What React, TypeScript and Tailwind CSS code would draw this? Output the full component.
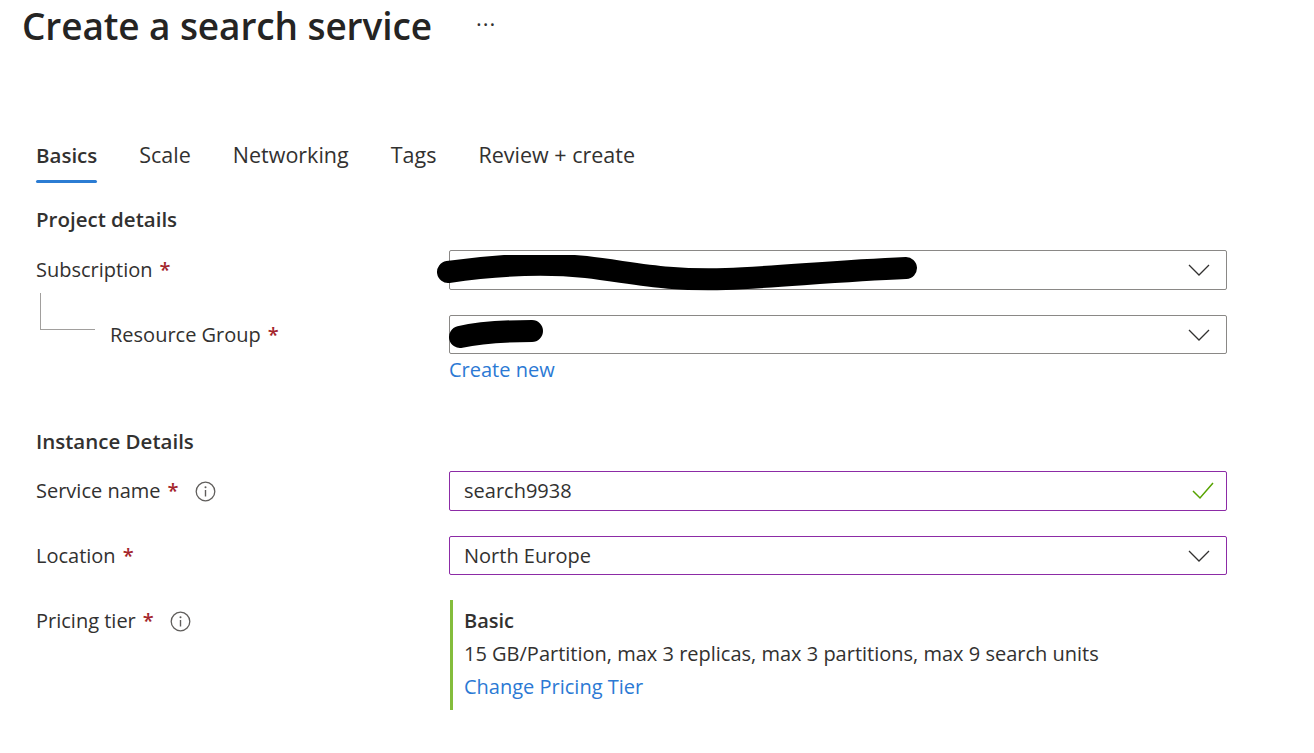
import React from "react"

const font = { fontFamily: '"Open Sans", "Noto Sans", sans-serif' }

function Chevron() {
  return (
    <svg width="22" height="12" viewBox="0 0 22 12" className="shrink-0">
      <path d="M1 1 L11 11 L21 1" fill="none" stroke="#323130" strokeWidth="1.3" />
    </svg>
  )
}

function Check() {
  return (
    <svg width="22" height="18" viewBox="0 0 22 18" className="shrink-0">
      <path d="M1 9 L8 16 L21 1" fill="none" stroke="#57a300" strokeWidth="1.5" />
    </svg>
  )
}

function Info() {
  return (
    <svg width="21" height="21" viewBox="0 0 21 21" className="shrink-0">
      <circle cx="10.5" cy="10.5" r="9.3" fill="none" stroke="#605e5c" strokeWidth="1.3" />
      <circle cx="10.5" cy="6.3" r="1" fill="#605e5c" />
      <path d="M10.5 9 V15.5" stroke="#605e5c" strokeWidth="1.4" />
    </svg>
  )
}

function Req() {
  return <span className="text-[#a4262c] font-semibold ml-[7px]">*</span>
}

function Label({ children, info }: { children: React.ReactNode; info?: boolean }) {
  return (
    <div className="flex items-center text-[20px] text-[#323130]">
      {children}
      <Req />
      {info && <span className="ml-[16px] flex"><Info /></span>}
    </div>
  )
}

export default function App() {
  const tabs = ["Basics", "Scale", "Networking", "Tags", "Review + create"]
  return (
    <div className="w-[1314px] h-[753px] bg-white text-[#323130] overflow-hidden" style={font}>
      <div className="flex items-center pl-[22px] pt-[4px] h-[48px]">
        <h1 className="text-[37px] leading-[40px] font-semibold tracking-[-0.1px] text-[#252423]">Create a search service</h1>
        <span className="ml-[44px] text-[22px] leading-[30px] tracking-[1px] text-[#323130] -mt-[6px]">···</span>
      </div>

      <div className="pl-[36px] pr-[87px]">
        <div className="flex gap-[42px] mt-[92px]">
          {tabs.map((t, i) => (
            <div key={t} className="flex flex-col">
              <span className={`leading-[30px] ${i === 0 ? "font-semibold text-[20.5px]" : "text-[21.5px]"}`}>{t}</span>
              <span className={`mt-[10px] h-[3px] rounded-sm ${i === 0 ? "bg-[#2b7cd3]" : "bg-transparent"}`} />
            </div>
          ))}
        </div>

        <h2 className="mt-[21px] text-[20.5px] font-semibold leading-[30px]">Project details</h2>

        <div className="grid grid-cols-[413px_778px] mt-[16px]">
          <div className="flex items-center h-[40px]">
            <Label>Subscription</Label>
          </div>
          <div className="relative h-[40px] border border-[#8a8886] rounded-[2px] flex items-center justify-end pr-[16px]">
            <svg className="absolute -left-[14px] top-[4px]" width="490" height="36" viewBox="0 0 490 36">
              <path
                d="M12 17 C 60 10, 110 8, 150 12 C 200 18, 230 26, 290 24 C 340 22, 400 16, 470 13"
                fill="none"
                stroke="#000"
                strokeWidth="22"
                strokeLinecap="round"
              />
            </svg>
            <Chevron />
          </div>
        </div>

        <div className="grid grid-cols-[413px_778px] mt-[25px]">
          <div className="flex">
            <div className="w-[55px] h-[37px] -mt-[22px] ml-[4px] border-l border-b border-[#a19f9d]" />
            <div className="flex items-center h-[40px] ml-[15px]">
              <Label>Resource Group</Label>
            </div>
          </div>
          <div>
            <div className="relative h-[39px] border border-[#8a8886] rounded-[2px] flex items-center justify-end pr-[16px]">
              <svg className="absolute left-[-4px] top-[2px]" width="110" height="34" viewBox="0 0 110 34">
                <path d="M14 19 C 35 14, 60 13, 86 13" fill="none" stroke="#000" strokeWidth="22" strokeLinecap="round" />
              </svg>
              <Chevron />
            </div>
            <a className="block mt-[2px] text-[20px] leading-[28px] text-[#2b79d4]">Create new</a>
          </div>
        </div>

        <h2 className="mt-[42px] text-[20.5px] font-semibold leading-[30px]">Instance Details</h2>

        <div className="grid grid-cols-[413px_778px] mt-[15px]">
          <div className="flex items-center h-[40px]">
            <Label info>Service name</Label>
          </div>
          <div className="h-[40px] border border-[#8c2ba6] rounded-[2px] flex items-center justify-between pl-[14px] pr-[12px]">
            <span className="text-[20px]">search9938</span>
            <Check />
          </div>
        </div>

        <div className="grid grid-cols-[413px_778px] mt-[25px]">
          <div className="flex items-center h-[39px]">
            <Label>Location</Label>
          </div>
          <div className="h-[39px] border border-[#8c2ba6] rounded-[2px] flex items-center justify-between pl-[14px] pr-[16px]">
            <span className="text-[20px]">North Europe</span>
            <Chevron />
          </div>
        </div>

        <div className="grid grid-cols-[413px_778px] mt-[25px]">
          <div className="flex items-start pt-[6px]">
            <Label info>Pricing tier</Label>
          </div>
          <div className="border-l-[3px] border-[#84bd3c] pl-[11px] pt-[4px] pb-[7px] ml-[1px]">
            <div className="text-[20px] font-semibold leading-[33px]">Basic</div>
            <div className="text-[20px] leading-[33px]">15 GB/Partition, max 3 replicas, max 3 partitions, max 9 search units</div>
            <a className="block text-[20px] leading-[33px] text-[#2b79d4]">Change Pricing Tier</a>
          </div>
        </div>
      </div>
    </div>
  )
}
